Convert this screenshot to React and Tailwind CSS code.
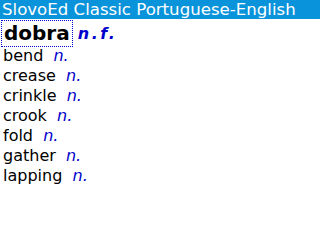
import React from "react"

const words = ["bend", "crease", "crinkle", "crook", "fold", "gather", "lapping"]

export default function App() {
  return (
    <div className="w-[320px] h-[240px] bg-white overflow-hidden" style={{ fontFamily: '"DejaVu Sans", sans-serif' }}>
      <div className="h-[19px] bg-[#0993da] text-white text-[16.6px] leading-[19px] pl-[2px] whitespace-nowrap">
        SlovoEd Classic Portuguese-English
      </div>
      <div className="flex items-center h-[27px] mt-[1px]">
        <div className="ml-[1px] px-[2px] h-[27px] border border-dotted border-[#0000cc] font-bold text-[20px] leading-[24px] text-black">
          dobra
        </div>
        <div className="ml-[5px] font-bold italic text-[16px] tracking-[2.5px] text-[#0000cc]">n.f.</div>
      </div>
      <div className="pl-[3px] -mt-[1px]">
        {words.map((w) => (
          <div key={w} className="h-[20px] text-[16px] leading-[20px] text-black whitespace-pre">
            {w}  <span className="italic text-[#0000cc]">n.</span>
          </div>
        ))}
      </div>
    </div>
  )
}
